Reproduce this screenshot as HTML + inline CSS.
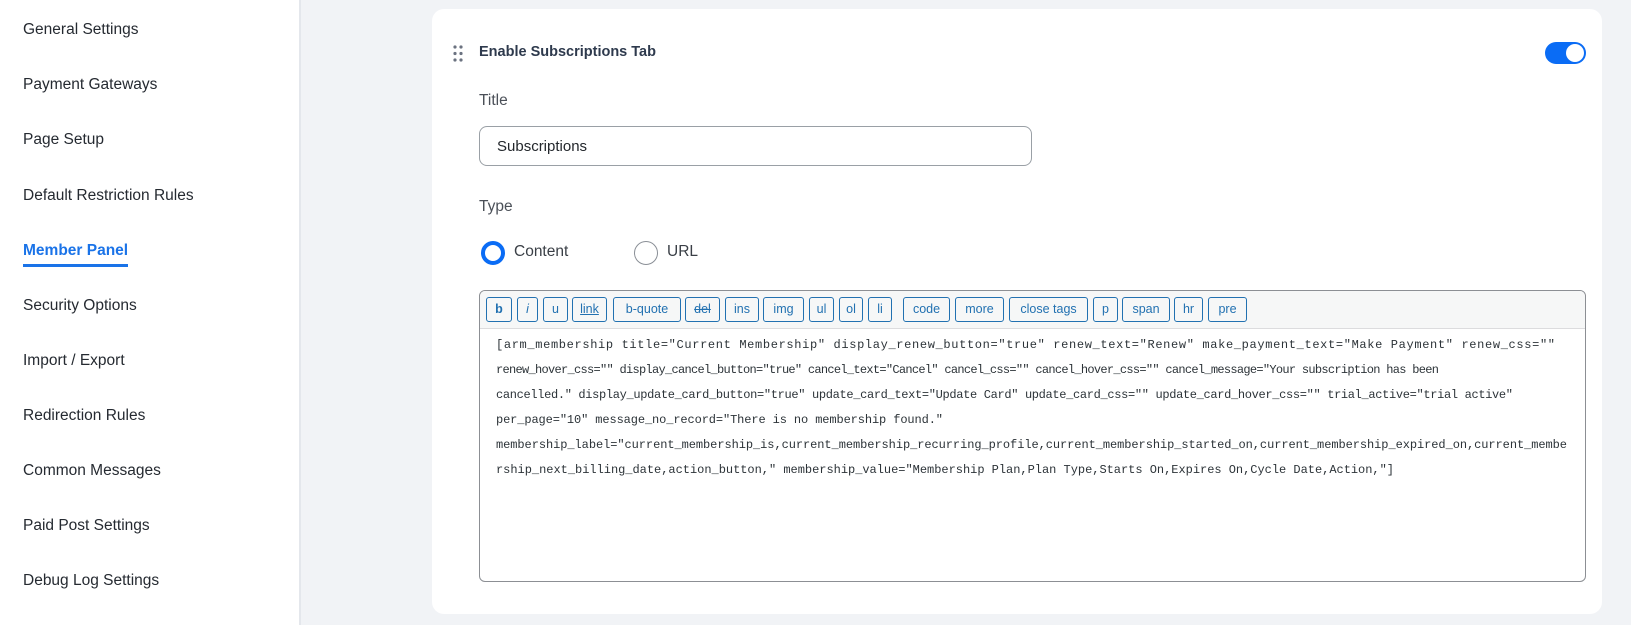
<!DOCTYPE html>
<html><head><meta charset="utf-8"><style>
*{box-sizing:border-box;margin:0;padding:0}
body{width:1631px;height:625px;background:#f1f3f6;font-family:"Liberation Sans",sans-serif;position:relative;overflow:hidden;color:#2b2f36}
.side{position:absolute;left:0;top:0;width:301px;height:625px;background:#fff;border-right:2px solid #e4e7ec}
.side div{position:absolute;left:23px;font-size:15.5px;color:#252a31;line-height:20px}
.side .act{color:#1a73e8;font-weight:bold;border-bottom:3px solid #1a73e8;padding-bottom:3px}
.card{position:absolute;left:432px;top:9px;width:1170px;height:605px;background:#fff;border-radius:12px}
.a{position:absolute}
.btn{position:absolute;top:297px;height:25px;border:1px solid #2271b1;border-radius:3px;color:#2271b1;font-size:12.5px;text-align:center;line-height:23px;background:#f6f7f7}
svg text{font-family:"Liberation Mono",monospace;font-size:12px;fill:#2c3338;white-space:pre}
</style></head><body>
<div class="side">
<div style="top:20px">General Settings</div>
<div style="top:75px">Payment Gateways</div>
<div style="top:130px">Page Setup</div>
<div style="top:186px">Default Restriction Rules</div>
<div class="act" style="top:241px">Member Panel</div>
<div style="top:296px">Security Options</div>
<div style="top:351px">Import / Export</div>
<div style="top:406px">Redirection Rules</div>
<div style="top:461px">Common Messages</div>
<div style="top:516px">Paid Post Settings</div>
<div style="top:571px">Debug Log Settings</div>
</div>
<div class="card"></div>
<svg class="a" style="left:452px;top:45px" width="12" height="18"><g fill="#6b7280"><circle cx="3" cy="2" r="1.6"/><circle cx="9" cy="2" r="1.6"/><circle cx="3" cy="8.5" r="1.6"/><circle cx="9" cy="8.5" r="1.6"/><circle cx="3" cy="15" r="1.6"/><circle cx="9" cy="15" r="1.6"/></g></svg>
<div class="a" style="left:479px;top:44px;font-size:14.5px;font-weight:bold;color:#2e3a4d">Enable Subscriptions Tab</div>
<div class="a" style="left:1545px;top:42px;width:41px;height:22px;border-radius:11px;background:#0a6cf5"><div style="position:absolute;right:2px;top:2px;width:18px;height:18px;border-radius:50%;background:#fff"></div></div>
<div class="a" style="left:479px;top:92px;font-size:15.5px;color:#4b5058">Title</div>
<div class="a" style="left:479px;top:126px;width:553px;height:40px;border:1px solid #9aa0a6;border-radius:8px;font-size:15px;padding:11px 0 0 17px;color:#23272c">Subscriptions</div>
<div class="a" style="left:479px;top:198px;font-size:15.5px;color:#4b5058">Type</div>
<div class="a" style="left:481px;top:241px;width:24px;height:24px;border-radius:50%;border:4px solid #0a6cf5"></div>
<div class="a" style="left:514px;top:243px;font-size:15.5px;color:#3a3f46">Content</div>
<div class="a" style="left:634px;top:241px;width:24px;height:24px;border-radius:50%;border:1px solid #8a8f96"></div>
<div class="a" style="left:667px;top:243px;font-size:15.5px;color:#3a3f46">URL</div>
<div class="a" style="left:479px;top:290px;width:1107px;height:292px;border:1px solid #8c8f94;border-radius:6px;overflow:hidden;background:#fff"><div style="height:38px;background:#f6f7f7;border-bottom:1px solid #dcdcde"></div></div>
<div class="btn" style="left:486px;width:26px;font-weight:bold">b</div>
<div class="btn" style="left:517px;width:21px;font-style:italic">i</div>
<div class="btn" style="left:543px;width:25px">u</div>
<div class="btn" style="left:572px;width:35px;text-decoration:underline">link</div>
<div class="btn" style="left:613px;width:68px">b-quote</div>
<div class="btn" style="left:685px;width:35px;text-decoration:line-through">del</div>
<div class="btn" style="left:725px;width:34px">ins</div>
<div class="btn" style="left:763px;width:41px">img</div>
<div class="btn" style="left:809px;width:25px">ul</div>
<div class="btn" style="left:839px;width:24px">ol</div>
<div class="btn" style="left:868px;width:24px">li</div>
<div class="btn" style="left:903px;width:47px">code</div>
<div class="btn" style="left:955px;width:49px">more</div>
<div class="btn" style="left:1009px;width:79px">close tags</div>
<div class="btn" style="left:1093px;width:25px">p</div>
<div class="btn" style="left:1122px;width:48px">span</div>
<div class="btn" style="left:1174px;width:29px">hr</div>
<div class="btn" style="left:1208px;width:39px">pre</div>
<svg class="a" style="left:0;top:0" width="1631" height="625">
<text x="496" y="348" textLength="1059" lengthAdjust="spacing">[arm_membership title="Current Membership" display_renew_button="true" renew_text="Renew" make_payment_text="Make Payment" renew_css=""</text>
<text x="496" y="373" textLength="943" lengthAdjust="spacing">renew_hover_css="" display_cancel_button="true" cancel_text="Cancel" cancel_css="" cancel_hover_css="" cancel_message="Your subscription has been</text>
<text x="496" y="398" textLength="1017" lengthAdjust="spacing">cancelled." display_update_card_button="true" update_card_text="Update Card" update_card_css="" update_card_hover_css="" trial_active="trial active"</text>
<text x="496" y="423" textLength="447" lengthAdjust="spacing">per_page="10" message_no_record="There is no membership found."</text>
<text x="496" y="448" textLength="1071" lengthAdjust="spacing">membership_label="current_membership_is,current_membership_recurring_profile,current_membership_started_on,current_membership_expired_on,current_membe</text>
<text x="496" y="473" textLength="898" lengthAdjust="spacing">rship_next_billing_date,action_button," membership_value="Membership Plan,Plan Type,Starts On,Expires On,Cycle Date,Action,"]</text>
</svg>
</body></html>
